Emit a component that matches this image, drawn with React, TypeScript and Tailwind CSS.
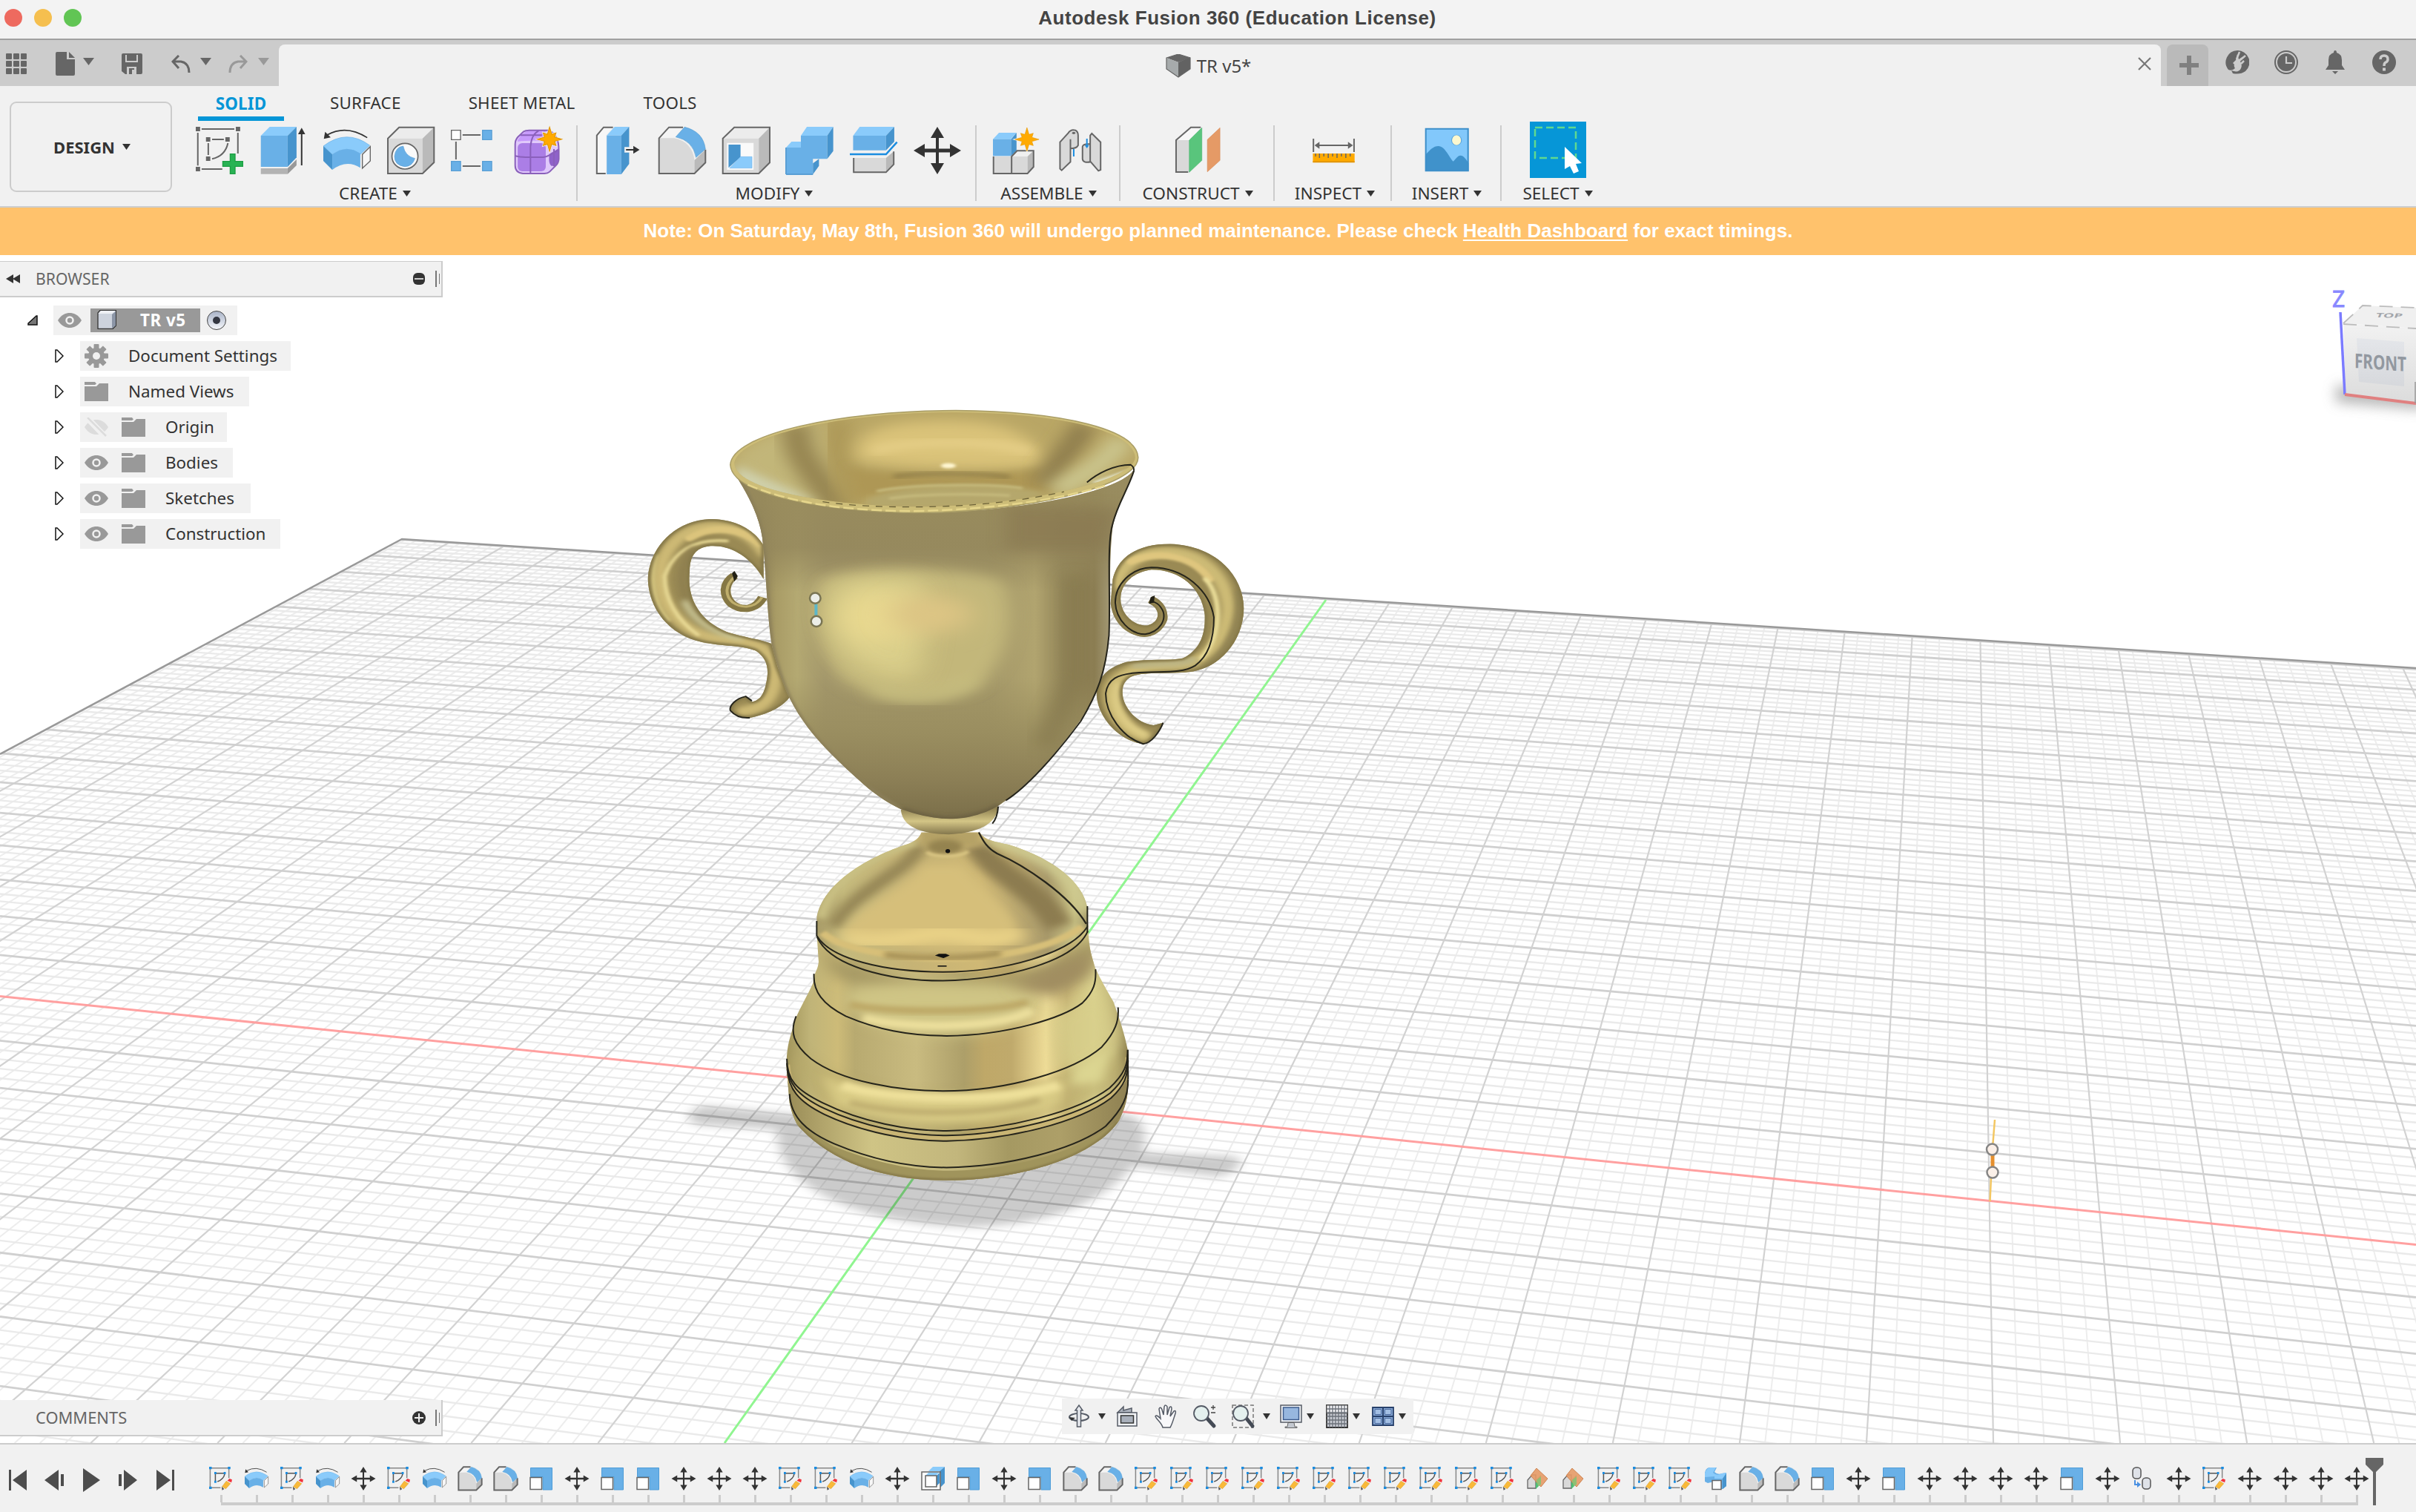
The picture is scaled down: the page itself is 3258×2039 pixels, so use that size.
import React from "react";

const INK = "#666666";

/* ---------- helpers ---------- */

function Pic({ box, className, children }: { box: string; className: string; children: React.ReactNode }) {
  return (
    <svg viewBox={box} preserveAspectRatio="none" className={"shrink-0 overflow-visible " + className}>
      {children}
    </svg>
  );
}

function Line(props: React.SVGProps<SVGPathElement>) {
  return <path fill="none" stroke={INK} strokeWidth={2} vectorEffect="non-scaling-stroke" {...props} />;
}

function Caret({ className = "h-2 w-[11px] text-[#333]" }: { className?: string }) {
  return (
    <svg viewBox="0 0 11 8" preserveAspectRatio="none" className={"shrink-0 " + className}>
      <path d="M0 0H11L5.5 8Z" fill="currentColor" />
    </svg>
  );
}

const star = (cx: number, cy: number, rx: number, ry: number) =>
  Array.from({ length: 16 }, (_, i) => {
    const r = i % 2 ? 0.45 : i % 4 === 0 ? 1 : 0.74;
    const a = (i * Math.PI) / 8 - Math.PI / 2;
    return `${(cx + rx * r * Math.cos(a)).toFixed(1)},${(cy + ry * r * Math.sin(a)).toFixed(1)}`;
  }).join(" ");

/* ---------- toolbar icons ---------- */

const IconSketch = () => (
  <Pic box="70 30 186 192" className="size-16">
    <Line d="M93 39H221M78 54V187M235 54V138M93 201H174M134 81H180M119 96V144M196 96Q185 148 134 160" />
    <path fill={INK} d="M70 30h17v18H70zM227 30h17v18h-17zM70 192h17v18H70zM110 72h17v18h-17zM186 72h17v18h-17zM110 150h17v18h-17z" />
    <path fill="#29b354" stroke="#1e9e44" strokeWidth="4" d="M205 140h19v30h30v20h-30v30h-19v-30h-29v-20h29z" />
  </Pic>
);
const IconExtrude = () => (
  <Pic box="320 30 186 192" className="size-16">
    <path fill="#b3b3b3" d="M325 198H430V221H325z" />
    <path fill="#999" d="M430 198L465 162V186L430 221z" />
    <path fill="#8acbfb" d="M325 66L360 30H465L430 66z" />
    <path fill="#69b0e7" d="M325 66H430V192H325z" />
    <path fill="#4794cd" d="M430 66L465 30V154L430 192z" />
    <Line d="M485 55V186" stroke="#333" />
    <path fill="#333" d="M485 34L499 60H471z" />
  </Pic>
);
const RevolveArt = () => (
  <>
    <path fill="#8acbfb" stroke="#69b0e7" strokeWidth="2" d="M569 108Q660 36 751 105L716 140Q660 100 604 142z" />
    <path fill="#4794cd" d="M569 108L604 142V204L569 168z" />
    <path fill="#69b0e7" d="M604 142Q660 100 714 138V196Q660 160 604 204z" />
    <path fill="#f7f7f7" stroke={INK} strokeWidth="4" d="M722 142L753 110V168L722 198z" />
    <path fill="none" stroke="#333" strokeWidth="5" d="M741 74Q660 20 585 62" />
    <path fill="#333" d="M571 79L576 50L598 73z" />
  </>
);
const IconRevolve = () => (
  <Pic box="569 30 186 192" className="size-16">
    <RevolveArt />
  </Pic>
);
const IconHole = () => (
  <Pic box="819 30 186 192" className="size-16">
    <path fill="#ececec" d="M822 77L866 32H1003L958 77z" />
    <path fill="#d9d9d9" d="M822 77H958V219H822z" />
    <path fill="#bababa" d="M958 77L1003 32V174L958 219z" />
    <Line d="M822 77L866 32H1003V174L958 219H822z" />
    <ellipse cx="889" cy="149" rx="51" ry="52" fill="#fafafa" stroke={INK} strokeWidth="5" />
    <path fill="#69b0e7" stroke="#5a9fd5" strokeWidth="2" d="M882 108Q890 150 928 158Q918 190 889 191Q848 186 848 149Q852 112 882 108z" />
  </Pic>
);
const IconPattern = () => (
  <Pic box="1069 30 186 192" className="size-16">
    <Line d="M1115 63H1185M1089 90V162M1115 189H1185" />
    <path fill="#fff" stroke={INK} strokeWidth="4" d="M1071 44h36v38h-36z" />
    <path fill="#69b0e7" stroke="#5a9fd5" strokeWidth="4" d="M1193 44h36v38h-36zM1071 170h36v38h-36zM1193 170h36v38h-36z" />
  </Pic>
);
const IconForm = () => (
  <Pic box="1318 30 186 192" className="size-16">
    <path fill="#e0c9fb" d="M1320 100Q1320 84 1330 72L1352 50Q1360 44 1375 44H1450Q1492 60 1491 125V160Q1490 176 1480 186L1455 212Q1448 219 1435 219H1350Q1320 216 1320 186z" />
    <path fill="#c79afc" d="M1330 84Q1350 48 1380 44H1440L1430 86Q1360 84 1330 90z" />
    <rect x="1330" y="96" width="110" height="114" rx="18" fill="#ab7ee6" />
    <path fill="#8f62ca" d="M1453 140L1491 118V160Q1488 176 1478 188H1462Q1453 180 1453 165z" />
    <Line d="M1320 100Q1320 84 1330 72L1352 50Q1360 44 1375 44H1450Q1492 60 1491 125V160Q1490 176 1480 186L1455 212Q1448 219 1435 219H1350Q1320 216 1320 186z" stroke="#8a60bb" />
    <Line d="M1320 148Q1340 154 1370 153H1430Q1450 152 1491 122M1380 216V110Q1384 60 1412 46M1340 64H1425M1472 190V120" stroke="#8a60bb" />
    <polygon points={star(1455, 80, 58, 60)} fill="#f1f1f1" />
    <polygon points={star(1455, 80, 48, 49)} fill="#ffaa00" stroke="#e19400" strokeWidth="3" />
  </Pic>
);
const IconPressPull = () => (
  <Pic box="1143 510 91 192" className="size-16">
    <path fill="#f7f7f7" d="M1147 545L1160 512H1178L1164 545V699H1147z" />
    <Line d="M1164 699H1147V545L1160 512H1178" />
    <path fill="#8acbfb" d="M1166 545L1181 510H1209L1194 545z" />
    <path fill="#69b0e7" d="M1166 545H1194V702H1166z" />
    <path fill="#4794cd" d="M1194 545L1209 510V660L1194 702z" />
    <path fill="#f1f1f1" d="M1200 592H1212V578L1234 603L1212 628V614H1200z" />
    <path fill="#333" d="M1203 600H1217V587L1229 603L1217 619V606H1203z" />
  </Pic>
);
const FilletArt = () => (
  <>
    <path fill="#f4f4f4" d="M1267 556L1286 512H1313L1298 552z" />
    <path fill="#d9d9d9" d="M1267 556H1296Q1330 570 1335 645V699H1267z" />
    <path fill="#bababa" d="M1335 645L1356 602V655L1335 699z" />
    <Line d="M1313 512H1286L1267 556V699H1335L1356 655V602" />
    <path fill="#69b0e7" stroke="#4794cd" strokeWidth="1" d="M1299 551L1316 511Q1352 530 1356 600L1338 634Q1332 565 1299 551z" />
  </>
);
const IconFillet = () => (
  <Pic box="1266 510 91 192" className="size-16">
    <FilletArt />
  </Pic>
);
const IconShell = () => (
  <Pic box="1388 510 91 192" className="size-16">
    <path fill="#ececec" d="M1389 557L1411 512H1479L1458 557z" />
    <path fill="#d9d9d9" d="M1389 557H1458V699H1389z" />
    <path fill="#bababa" d="M1458 557L1479 512V655L1458 699z" />
    <Line d="M1389 557L1411 512H1479V655L1458 699H1389z" />
    <path fill="#fafafa" d="M1397 575H1448V684H1397z" />
    <path fill="#4794cd" d="M1400 582H1423V632L1400 676z" />
    <path fill="#8acbfb" stroke="#69b0e7" strokeWidth="1" d="M1402 677L1423 631H1445V677z" />
  </Pic>
);
const IconCombine = () => (
  <Pic box="81 510 86.5 192" className="size-16">
    <path fill="#8acbfb" d="M108 546L119 510H167L156 546zM81 594L91 570H108V594z" />
    <path fill="#69b0e7" d="M108 546H156V640H130V702H81V594H108z" />
    <path fill="#4794cd" d="M156 546L167 510V608L156 640zM130 658L141 640V668L130 702z" />
    <Line d="M81 702H130M81 594V702" stroke="#5a9fd5" />
  </Pic>
);
const IconSplit = () => (
  <Pic box="197 510 86.5 192" className="size-16">
    <path fill="#8acbfb" d="M203 546L215 510H278L263 546z" />
    <path fill="#69b0e7" d="M203 546H263V605H203z" />
    <path fill="#4794cd" d="M263 546L278 510V570L263 605z" />
    <Line d="M197 621H263L283 572" stroke="#1a8ce0" strokeWidth={2.5} />
    <path fill="#d9d9d9" d="M204 636H263V694H204z" />
    <path fill="#bababa" d="M263 636L277 610V662L263 694z" />
    <Line d="M204 636V694H263L277 662V610" />
  </Pic>
);
const MoveArt = () => (
  <path fill="#333" d="M32 0L41 15H34V29.500H49V23L64 32L49 41V34.500H34V49H41L32 64L23 49H30V34.500H15V41L0 32L15 23V29.500H30V15H23Z" />
);
const IconMove = () => (
  <Pic box="0 0 64 64" className="size-16">
    <MoveArt />
  </Pic>
);
const IconNewComponent = () => (
  <Pic box="460 510 86.5 192" className="size-16">
    <path fill="#8acbfb" d="M460 560L471 534H503L492 560z" />
    <path fill="#69b0e7" d="M460 560H493V628H460z" />
    <path fill="#4794cd" d="M493 560L503 534V606L493 628z" />
    <path fill="#d9d9d9" d="M461 630H523V699H461z" />
    <path fill="#f0f0f0" d="M494 630L504 607H534L523 630z" />
    <path fill="#bababa" d="M523 630L534 607V672L523 699z" />
    <Line d="M461 630V699H523L534 672V607H504L494 630V699" />
    <polygon points={star(522, 561, 27, 58)} fill="#f1f1f1" />
    <polygon points={star(522, 561, 22, 48)} fill="#ffaa00" stroke="#e19400" strokeWidth="1" />
  </Pic>
);
const IconJoint = () => (
  <Pic box="576 510 86.500 192" className="size-16">
    <path fill="#d9d9d9" d="M582 572L597 535Q602 518 610 524Q615 530 615 545V585Q612 598 601 598V652L585 686L582 680z" />
    <Line d="M582 572L597 535Q602 518 610 524Q615 530 615 545V585Q612 598 601 598V652L585 686L582 680zM601 598V560" />
    <ellipse cx="607" cy="535" rx="3" ry="5" fill={INK} />
    <path fill="#d9d9d9" d="M637 572L639 535L656 572V684L652 688L638 652Q624 658 623 640V590Q624 578 637 580z" />
    <Line d="M637 580V545L640 537L656 572V684L652 688L638 652Q624 658 623 640V590Q624 578 637 580V652" />
    <Line d="M607 600V630M631 558V588" stroke="#1a8ce0" />
    <path fill="#1a8ce0" d="M627 584H635L631 597z" />
  </Pic>
);
const IconConstruct = () => (
  <Pic box="789 510 86.500 192" className="size-16">
    <path fill="#d9d9d9" d="M793 564H817V694H793z" />
    <path fill="#f7f7f7" d="M793 564L820 512H838L817 564z" />
    <Line d="M815 693H793V564L820 512H838" />
    <path fill="#59c57c" stroke="#3eb065" strokeWidth="1" d="M817 564L840 514V646L817 694z" />
    <path fill="#e59a66" stroke="#d58450" strokeWidth="1" d="M850 562L873 514V646L850 692z" />
  </Pic>
);
const IconInspect = () => (
  <Pic box="1035 510 86.500 192" className="size-16">
    <Line d="M1042 558V612M1116 558V612M1046 585H1112" />
    <path fill={INK} d="M1044 585L1053 571V599zM1114 585L1105 571V599z" />
    <path fill="#ffaa00" d="M1041 618H1117V654H1041z" />
    <Line d="M1041 652H1117" stroke="#e19400" />
    <Line d="M1046 618V630M1053 618V636M1061 618V630M1069 618V636M1077 618V630M1085 618V636M1093 618V630M1101 618V636M1109 618V630" strokeWidth={1.500} />
  </Pic>
);
const IconInsert = () => (
  <Pic box="1242 510 86.500 192" className="size-16">
    <path fill="#82c8fb" d="M1246 516H1325V690H1246z" />
    <ellipse cx="1303" cy="564" rx="9" ry="21" fill="#fdf8cf" stroke="#5aa5de" strokeWidth="1.500" />
    <path fill="#4092cb" d="M1246 625C1255 602 1261 588 1270 588C1282 588 1290 636 1297 650C1302 640 1305 626 1310 626C1317 626 1321 646 1325 656V690H1246z" />
    <Line d="M1247 518H1324V688H1247z" stroke="#3e8fc9" />
  </Pic>
);
const IconSelect = () => (
  <div className="flex h-[76px] w-[76px] items-center justify-center bg-[#0696d7]">
    <svg viewBox="0 0 76 76" className="size-[76px]">
      <path fill="none" stroke="#5fd98f" strokeWidth="2.500" strokeDasharray="10 5" d="M7 8H62V49H7z" />
      <path fill="#fff" d="M47 34L70 56L62 57L66 67L59 70L54 60L47 64z" />
    </svg>
  </div>
);

/* ---------- timeline icons ---------- */

const tl = "h-8 w-8";
const TSketch = () => (
  <Pic box="402 354 45.6 96" className={tl}>
    <Line d="M405 359H441M404 362V438M440 362V400M405 439H424" strokeWidth={1.500} stroke="#888" />
    <Line d="M415 380H432M414 383V412M432 383Q430 405 418 414" strokeWidth={1.500} stroke="#555" />
    <path fill="#1a8ce0" d="M402 354h5v10h-5zM438 354h5v10h-5zM402 434h5v10h-5zM412 375h4v9h-4zM430 375h4v9h-4zM412 410h4v9h-4z" />
    <path fill="#f9b93a" stroke="#d99a20" strokeWidth="1" d="M427 434L435 412L443 422L434 443z" />
    <path fill="#f2323c" d="M437 410L441 402L446 406L445 418z" />
    <path fill="#555" d="M426 434L431 444L427 449z" />
  </Pic>
);
const TRevolve = () => (
  <Pic box="569 30 186 192" className={tl}>
    <RevolveArt />
  </Pic>
);
const TMove = () => (
  <Pic box="1 0 62 64" className={tl}>
    <MoveArt />
  </Pic>
);
const TFillet = () => (
  <Pic box="1266 510 91 192" className={tl}>
    <FilletArt />
  </Pic>
);
const TScale = () => (
  <Pic box="0 0 32 32" className={tl}>
    <path fill="#69b0e7" stroke="#4f9dd8" d="M1.500 1.500H30.500V31H18V13.500H1.500z" />
    <path fill="#fff" stroke={INK} strokeWidth="1.500" d="M1 14.500H16.500V30.500H1z" />
  </Pic>
);
const TExtrude = () => (
  <Pic box="0 0 32 32" className={tl}>
    <path fill="#8acbfb" d="M10 6L16 0H32L25 6z" />
    <path fill="#4794cd" d="M25 6L32 0V22L25 29z" />
    <path fill="#fff" stroke={INK} strokeWidth="1.500" d="M1 7H26V31H1z" />
    <path fill="#8acbfb" d="M6 12L10 8H24L20 12z" />
    <path fill="#4794cd" d="M21 12L25 8V22L21 26z" />
    <path fill="#fff" stroke={INK} strokeWidth="1.500" d="M6 12H21V27H6z" />
  </Pic>
);
const TPlane = () => (
  <Pic box="0 0 32 32" className={tl}>
    <path fill="#d9d9d9" stroke={INK} strokeWidth="1.300" d="M2 18L8 11H13V29H2z" />
    <path fill="#4cbf74" d="M13 18L20 11V23L13 30z" />
    <path fill="#e59a66" fillOpacity="0.9" stroke="#cf8450" d="M14 2L29 16L20 27L6 12z" />
    <path fill="#8fbf74" d="M14 18L20 13V24L16 26z" />
  </Pic>
);
const TCombine = () => (
  <Pic box="0 0 32 32" className={tl}>
    <path fill="#69b0e7" d="M1 8Q2 2 7 1H17L14 7Q18 11 24 9L30 8V26L25 30H13V20L5 22L1 20z" />
    <path fill="#8acbfb" d="M1 9Q3 2 8 1H16L12 8Q17 13 24 9L30 8L25 16H14V13L1 14z" />
    <path fill="#4794cd" d="M25 16L30 9V26L25 30z" />
    <path fill="#fff" stroke={INK} strokeWidth="1.500" d="M11 18.500H23V30.500H11z" />
  </Pic>
);
const TJoint = () => (
  <Pic box="0 0 32 32" className={tl}>
    <rect x="2" y="1" width="11" height="15" rx="4.500" fill="#dfe2e8" stroke="#555" strokeWidth="1.500" />
    <rect x="15" y="15" width="11" height="15" rx="4.500" fill="#dfe2e8" stroke="#555" strokeWidth="1.500" />
    <path stroke="#4a90e2" strokeWidth="2" fill="none" d="M5 18V24H10" />
    <path fill="#4a90e2" d="M8 20L13 24L8 28z" />
  </Pic>
);

const timelineIcons: Record<string, () => React.ReactElement> = {
  s: TSketch,
  r: TRevolve,
  m: TMove,
  f: TFillet,
  c: TScale,
  e: TExtrude,
  p: TPlane,
  b: TCombine,
  j: TJoint,
};
const timeline = "srsrmsrffcmccmmmssrmecmcffsssssssssssppsssbffcmcmmmmcmjmsmmmm".split("");

/* ---------- scene ---------- */

const HORIZON = -400;
const fan: { x: number; major: boolean; axis: boolean }[] = [];
for (let i = -80; i <= 100; i++) fan.push({ x: 977.5 + (171.05 / 5) * i, major: i % 5 === 0, axis: i === 0 });
const rows: { y0: number; y1: number; major: boolean; axis: boolean }[] = [];
for (let i = -50; i <= 90; i++) {
  const s = 1 / (9.732 + (0.322 / 5) * i);
  rows.push({ y0: HORIZON + s * 16969, y1: HORIZON + s * (16969 + 3258), major: i % 5 === 0, axis: i === 0 });
}

function Grid() {
  return (
    <g>
      <clipPath id="floor">
        <path d="M542 727L3258 901V1946H0V1017z" />
      </clipPath>
      <g clipPath="url(#floor)" fill="none">
        {fan.filter((l) => !l.major).map((l) => (
          <path key={l.x} d={`M2650 ${HORIZON}L${l.x} 1946`} stroke="#ededed" strokeWidth="2" />
        ))}
        {rows.filter((l) => !l.major).map((l) => (
          <path key={l.y0} d={`M0 ${l.y0}L3258 ${l.y1}`} stroke="#eaeaea" strokeWidth="2.400" />
        ))}
        {fan.filter((l) => l.major && !l.axis).map((l) => (
          <path key={l.x} d={`M2650 ${HORIZON}L${l.x} 1946`} stroke="#d2d2d2" strokeWidth="2.200" />
        ))}
        {rows.filter((l) => l.major && !l.axis).map((l) => (
          <path key={l.y0} d={`M0 ${l.y0}L3258 ${l.y1}`} stroke="#d0d0d0" strokeWidth="2.800" />
        ))}
      </g>
      <path d="M0 1017L542 727L3258 901" fill="none" stroke="#999" strokeWidth="2.500" />
      <path d="M0 1343.500L3258 1678.500" stroke="#ffa0a0" strokeWidth="3" />
      <path d="M1788 809L977 1946" stroke="#90f590" strokeWidth="3" />
    </g>
  );
}

const CUP =
  "M258 275C285 340 325 420 335 520C345 640 345 760 357 880C370 960 385 1020 400 1065C440 1180 500 1260 577 1358C610 1400 640 1425 668 1445C720 1470 760 1480 800 1477C850 1472 890 1445 905 1430C960 1380 1040 1260 1100 1140C1140 1050 1160 980 1167 850C1172 720 1168 580 1177 480C1190 400 1215 350 1228 285C1200 360 960 432 700 435C470 425 300 370 258 275Z";
const RIM = "M258 270C262 165 520 85 800 85C1060 88 1235 150 1238 245C1238 345 960 434 700 434C470 428 262 370 258 270Z";
const INNER = "M268 262C280 170 530 91 800 91C1050 94 1226 153 1231 245C1226 330 950 412 700 413C480 407 264 352 268 262Z";
const LEFT_HANDLE =
  "M338 545C310 480 260 455 210 455C120 460 62 560 60 660C62 760 110 850 190 875C240 890 290 885 320 905C345 930 352 960 345 1010C340 1050 330 1075 310 1078L295 1060C270 1068 255 1092 258 1108C270 1128 285 1135 305 1133C350 1120 385 1095 402 1060L372 960L357 880C330 865 280 855 250 840C180 800 155 720 160 640C160 590 170 555 205 548C260 540 310 590 338 660Z";
const RIGHT_HANDLE =
  "M1177 660C1190 580 1240 540 1315 540C1420 545 1490 640 1492 760C1490 880 1430 960 1370 975C1320 985 1270 975 1230 988C1200 1000 1195 1040 1205 1080C1220 1130 1250 1155 1275 1158L1298 1150C1290 1180 1270 1220 1250 1222C1200 1215 1140 1140 1138 1050C1140 990 1170 960 1210 943C1260 930 1310 940 1345 930C1390 900 1400 840 1398 780C1390 690 1340 628 1270 628C1215 640 1190 690 1197 745C1205 795 1235 820 1260 818C1285 810 1290 780 1281 763C1278 752 1268 748 1262 740L1272 718C1295 730 1312 760 1308 800C1295 845 1270 858 1250 857C1205 850 1175 800 1172 740Z";
const DOME =
  "M655 158C650 175 640 188 620 198C520 240 400 330 385 450V510C420 590 560 640 710 640C870 640 1040 570 1085 480L1082 410C1070 330 1000 250 880 200C845 190 818 185 805 158Z";
const FOOT =
  "M385 500L390 600C388 630 376 640 376 670C360 720 330 780 325 820C312 870 307 900 307 960L315 1080C320 1110 325 1130 335 1155C410 1270 540 1345 720 1345C900 1345 1100 1270 1165 1140C1180 1100 1188 1060 1188 1020L1187 900C1180 850 1165 790 1150 735C1130 690 1110 640 1103 620C1095 580 1086 560 1085 475C1040 570 870 634 710 634C560 634 420 590 385 500Z";
const RINGS = [
  "M385 460V510C420 590 560 634 710 634C870 634 1040 570 1083 480",
  "M386 515C420 615 570 664 710 664C870 660 1050 600 1084 495",
  "M378 640C375 700 400 745 460 785C540 830 620 852 720 852C880 850 1020 790 1070 740C1100 700 1106 670 1104 625",
  "M332 785C315 840 325 880 370 930C450 1010 600 1040 710 1040C880 1040 1050 970 1120 890C1155 840 1165 800 1162 755",
  "M308 930C308 1000 330 1035 400 1080C500 1145 620 1176 720 1176C880 1172 1060 1110 1140 1030C1180 980 1187 950 1187 900",
  "M308 945C310 1015 335 1055 405 1100C500 1160 620 1192 720 1192C880 1188 1060 1128 1142 1047C1180 1000 1187 970 1187 915",
  "M309 965C312 1030 335 1075 405 1120C500 1180 620 1211 720 1211C880 1207 1060 1148 1144 1064C1180 1020 1187 990 1188 935",
  "M315 1050C318 1130 360 1180 430 1220C520 1270 620 1301 720 1301C880 1298 1050 1240 1130 1160C1175 1100 1188 1060 1188 1000",
];

function Handle({ d, id, children }: { d: string; id: string; children: React.ReactNode }) {
  return (
    <g>
      <clipPath id={id}>
        <path d={d} />
      </clipPath>
      <path d={d} fill="#9a8a54" />
      <g clipPath={`url(#${id})`} fill="none" strokeLinecap="round">
        {children}
        <path d={d} stroke="#857848" strokeWidth="12" filter="url(#b4)" />
      </g>
    </g>
  );
}

function Trophy() {
  return (
    <g>
      <defs>
        {[
          ["b4", 4],
          ["b8", 8],
          ["b14", 14],
          ["b22", 22],
          ["b34", 34],
        ].map(([id, s]) => (
          <filter key={id} id={String(id)} x="-50%" y="-50%" width="200%" height="200%">
            <feGaussianBlur stdDeviation={s} />
          </filter>
        ))}
        <linearGradient id="cupH" x1="335" x2="1175" y1="0" y2="0" gradientUnits="userSpaceOnUse">
          <stop offset="0" stopColor="#8e8157" />
          <stop offset="0.04" stopColor="#a99c66" />
          <stop offset="0.1" stopColor="#b4a972" />
          <stop offset="0.18" stopColor="#a2966a" />
          <stop offset="0.65" stopColor="#a39768" />
          <stop offset="0.78" stopColor="#b1a46f" />
          <stop offset="0.86" stopColor="#94875a" />
          <stop offset="0.95" stopColor="#8b7d52" />
          <stop offset="1" stopColor="#a59b78" />
        </linearGradient>
        <linearGradient id="cupV" x1="0" x2="0" y1="400" y2="1480" gradientUnits="userSpaceOnUse">
          <stop offset="0" stopColor="#978a5c" stopOpacity="0.9" />
          <stop offset="0.14" stopColor="#93865b" stopOpacity="0.8" />
          <stop offset="0.28" stopColor="#93865b" stopOpacity="0" />
          <stop offset="0.55" stopColor="#9a8e5e" stopOpacity="0" />
          <stop offset="0.72" stopColor="#988c5e" stopOpacity="0.8" />
          <stop offset="0.87" stopColor="#8b7e55" stopOpacity="0.95" />
          <stop offset="1" stopColor="#7a6e49" />
        </linearGradient>
        <linearGradient id="dome" x1="385" x2="1085" y1="0" y2="0" gradientUnits="userSpaceOnUse">
          <stop offset="0" stopColor="#a99c68" />
          <stop offset="0.1" stopColor="#c4b97c" />
          <stop offset="0.35" stopColor="#c6b375" />
          <stop offset="0.6" stopColor="#cfb875" />
          <stop offset="0.85" stopColor="#a8996a" />
          <stop offset="0.95" stopColor="#c9c285" />
          <stop offset="1" stopColor="#a39868" />
        </linearGradient>
        <linearGradient id="foot" x1="307" x2="1188" y1="0" y2="0" gradientUnits="userSpaceOnUse">
          <stop offset="0" stopColor="#a3965c" />
          <stop offset="0.07" stopColor="#c0b478" />
          <stop offset="0.15" stopColor="#cdbb78" />
          <stop offset="0.2" stopColor="#b8aa70" />
          <stop offset="0.38" stopColor="#c9bb80" />
          <stop offset="0.52" stopColor="#ad9f69" />
          <stop offset="0.58" stopColor="#bfa868" />
          <stop offset="0.66" stopColor="#c0aa6c" />
          <stop offset="0.76" stopColor="#efdd98" />
          <stop offset="0.82" stopColor="#c9b777" />
          <stop offset="0.9" stopColor="#dcd490" />
          <stop offset="0.96" stopColor="#bcb074" />
          <stop offset="1" stopColor="#8f8250" />
        </linearGradient>
        <linearGradient id="band" x1="307" x2="1188" y1="0" y2="0" gradientUnits="userSpaceOnUse">
          <stop offset="0" stopColor="#988b56" />
          <stop offset="0.1" stopColor="#b0a36a" />
          <stop offset="0.25" stopColor="#cfc485" />
          <stop offset="0.5" stopColor="#c2b67c" />
          <stop offset="0.65" stopColor="#a59962" />
          <stop offset="0.8" stopColor="#ad9f68" />
          <stop offset="1" stopColor="#8f8152" />
        </linearGradient>
        <linearGradient id="collar" x1="0" x2="0" y1="75" y2="165" gradientUnits="userSpaceOnUse">
          <stop offset="0" stopColor="#8d7f50" />
          <stop offset="0.5" stopColor="#d3c586" />
          <stop offset="1" stopColor="#83764c" />
        </linearGradient>
      </defs>

      {/* floor shadow */}
      <g transform="translate(900 1060) scale(.52296 .39541)">
        <path
          d="M95 1090L330 1120H1180C1225 1130 1240 1170 1225 1250L1460 1262C1495 1275 1475 1315 1420 1332L1200 1296C1120 1430 960 1503 770 1503C520 1495 325 1390 290 1240L280 1170L80 1155C40 1140 50 1105 95 1090Z"
          fill="#000"
          fillOpacity="0.205"
          filter="url(#b14)"
        />
      </g>

      {/* base */}
      <g transform="translate(900 1060) scale(.52296 .39541)">
        <clipPath id="footClip">
          <path d={FOOT} />
        </clipPath>
        <path d={FOOT} fill="url(#foot)" />
        <g clipPath="url(#footClip)">
          <path d="M385 500C420 615 570 670 710 670C870 664 1050 600 1090 495L1130 560L1060 650C900 730 560 730 420 640Z" fill="#a59864" filter="url(#b22)" />
          <path d="M460 700C560 660 860 660 950 700C1000 760 900 850 720 850C560 846 450 780 460 700Z" fill="#cfc585" filter="url(#b22)" />
          <path d="M470 745C560 775 850 775 930 735" stroke="#bda866" strokeWidth="24" fill="none" filter="url(#b8)" />
          <path d="M505 790C600 830 860 830 940 765" stroke="#ecdf9c" strokeWidth="28" fill="none" filter="url(#b8)" />
          <path d="M890 680L980 620L1100 560L1090 640L1000 720Z" fill="#a08d60" filter="url(#b22)" />
          <path d="M980 740L1010 780L1110 690L1130 720L1170 860L1080 980L1010 960Z" fill="#d8cf8b" opacity=".8" filter="url(#b22)" />
          <path d="M320 960C350 1080 560 1190 720 1185C900 1185 1120 1100 1190 960L1130 900C1050 1000 880 1045 710 1042C560 1040 420 1000 340 890Z" fill="#b8aa6c" opacity=".55" filter="url(#b14)" />
          <path d="M400 985C500 1050 620 1062 720 1062C860 1062 960 1040 1030 1000L1010 1080C920 1130 820 1150 720 1150C600 1150 480 1120 430 1080Z" fill="#d8ca84" filter="url(#b14)" />
          <path d="M450 1020C560 1072 860 1085 1010 1020" stroke="#eee09a" strokeWidth="32" fill="none" filter="url(#b8)" />
          <path d="M470 1080C600 1125 830 1125 960 1070" stroke="#bfae70" strokeWidth="20" fill="none" filter="url(#b8)" />
          <path d="M1050 960L1150 880L1120 1010L1040 1020Z" fill="#dcd591" filter="url(#b14)" />
          <path d="M300 960C312 1030 335 1075 405 1120C500 1180 620 1211 720 1211C880 1207 1060 1148 1144 1064C1180 1020 1187 990 1188 935L1200 1380H300Z" fill="url(#band)" />
          <path d="M309 950C312 1020 335 1065 405 1110C500 1170 620 1200 720 1200C880 1196 1060 1138 1144 1055C1180 1010 1187 980 1188 925" stroke="#c9b574" strokeWidth="14" fill="none" />
          <path d="M300 1050C318 1150 430 1230 430 1230C520 1276 620 1312 720 1312C880 1312 1050 1250 1130 1170L1200 1100V1380H300Z" fill="#a0945c" />
          <path d="M335 1160C410 1275 540 1347 720 1347C900 1347 1100 1275 1165 1145" stroke="#857848" strokeWidth="16" fill="none" filter="url(#b4)" />
        </g>

        <clipPath id="domeClip">
          <path d={DOME} />
        </clipPath>
        <path d={DOME} fill="url(#dome)" />
        <g clipPath="url(#domeClip)">
          <path d="M650 200C640 280 480 350 430 480" stroke="#948555" strokeWidth="40" fill="none" filter="url(#b14)" />
          <path d="M800 200C830 290 960 350 1010 480" stroke="#8c7c50" strokeWidth="70" fill="none" filter="url(#b14)" />
          <path d="M660 270C620 350 470 420 450 510C600 560 840 560 900 510C920 440 800 350 760 270Z" fill="#d6bf7a" filter="url(#b14)" />
          <path d="M450 520C580 545 620 510 710 500C800 510 840 545 920 500" stroke="#efd78a" strokeWidth="44" fill="none" filter="url(#b22)" />
          <path d="M400 500C480 600 900 640 1070 480" stroke="#d7bf78" strokeWidth="22" fill="none" filter="url(#b4)" />
          <path d="M560 575C640 590 780 590 860 570" stroke="#9f8a52" strokeWidth="18" fill="none" filter="url(#b8)" />
          <path d="M830 180C960 230 1060 300 1075 430" stroke="#cfca90" strokeWidth="40" fill="none" filter="url(#b14)" />
          <path d="M640 190C520 240 420 320 395 450" stroke="#c9c083" strokeWidth="26" fill="none" filter="url(#b8)" />
          <path d="M655 150H805V205H655Z" fill="#b5a266" filter="url(#b8)" />
          <ellipse cx="716" cy="208" rx="46" ry="26" fill="#94834f" filter="url(#b8)" />
          <path d="M670 225C680 245 760 245 775 222" stroke="#d9c582" strokeWidth="10" fill="none" filter="url(#b4)" />
        </g>
        <ellipse cx="723" cy="222" rx="6" ry="7" fill="#111" />
        <path d="M690 578L700 572H718L728 578L712 587Z" fill="#111" />
        <path d="M697 614H720" stroke="#111" strokeWidth="4" />
        <g fill="none" stroke="#25241b">
          {RINGS.map((d) => (
            <path key={d} d={d} strokeWidth="2" vectorEffect="non-scaling-stroke" />
          ))}
          <path d="M803 158C815 190 825 212 850 230C920 270 1035 370 1080 470" strokeWidth="2.200" vectorEffect="non-scaling-stroke" />
          <path d="M1083 410V500M1187 900L1188 1000" strokeWidth="2" vectorEffect="non-scaling-stroke" />
        </g>
        <path d="M602 80C605 130 640 162 725 165C800 160 850 130 853 70Z" fill="url(#collar)" />
        <path d="M853 70C852 90 850 110 838 128" stroke="#25241b" strokeWidth="2" vectorEffect="non-scaling-stroke" fill="none" />
      </g>

      {/* cup */}
      <g transform="translate(840 520) scale(.56122 .39541)">
        <path d="M336 722C318 768 285 768 262 745C240 715 242 672 268 648" fill="none" stroke="#857744" strokeWidth="24" />
        <path d="M334 722C316 762 285 760 264 740C244 715 246 680 268 652" fill="none" stroke="#bfae6c" strokeWidth="7" />
        <path d="M262 640L268 632L276 650L268 668Z" fill="#222015" />
        <Handle d={LEFT_HANDLE} id="lh">
          <path d="M340 570C310 500 260 480 210 482C130 490 90 570 88 660C92 760 150 850 230 862C300 870 350 880 365 960C370 1040 350 1100 290 1110" stroke="#cdb974" strokeWidth="34" filter="url(#b8)" />
          <path d="M330 540C290 490 220 470 160 520" stroke="#dcc47c" strokeWidth="22" filter="url(#b4)" />
          <path d="M250 530C170 520 120 570 100 650C100 730 130 800 180 850" stroke="#eadb96" strokeWidth="9" filter="url(#b4)" />
          <path d="M170 560C130 620 130 720 190 800" stroke="#8e7f50" strokeWidth="20" filter="url(#b8)" />
          <path d="M150 740C170 800 210 840 280 860" stroke="#c9c594" strokeWidth="18" filter="url(#b8)" />
          <path d="M80 580C65 650 70 740 110 800" stroke="#d6c680" strokeWidth="10" filter="url(#b4)" />
        </Handle>
        <path d="M310 1075L295 1060C270 1068 255 1092 258 1108C270 1128 285 1135 305 1133" fill="none" stroke="#25241b" strokeWidth="2" vectorEffect="non-scaling-stroke" />

        <Handle d={RIGHT_HANDLE} id="rh">
          <path d="M1185 680C1200 600 1250 565 1315 568C1400 575 1450 660 1455 760C1450 860 1410 940 1340 952C1270 955 1200 960 1175 1030C1165 1100 1200 1170 1250 1195" stroke="#cdbb76" strokeWidth="34" filter="url(#b8)" />
          <path d="M1220 600C1290 560 1370 580 1410 660" stroke="#dfc67e" strokeWidth="22" filter="url(#b4)" />
          <path d="M1400 660C1440 720 1440 850 1390 930" stroke="#ecdf9a" strokeWidth="12" filter="url(#b4)" />
          <path d="M1480 700C1490 800 1460 900 1400 960" stroke="#8f8253" strokeWidth="18" filter="url(#b8)" />
          <path d="M1230 955C1290 945 1330 955 1370 935" stroke="#b9b488" strokeWidth="18" filter="url(#b8)" />
          <path d="M1190 1020C1170 1090 1210 1170 1255 1190" stroke="#e3d28a" strokeWidth="16" filter="url(#b8)" />
        </Handle>
        <g fill="none" stroke="#25241b">
          <path d="M1298 1150C1290 1180 1270 1220 1250 1222C1200 1200 1160 1120 1160 1050C1165 1000 1190 985 1230 980C1290 972 1340 985 1375 955C1410 920 1420 860 1420 790C1410 700 1350 620 1270 620C1220 622 1183 680 1183 740C1185 800 1220 848 1255 848C1290 840 1305 800 1298 770C1290 745 1278 735 1268 738" strokeWidth="2" vectorEffect="non-scaling-stroke" />
        </g>
        <path d="M1264 744L1268 722L1278 716L1276 740Z" fill="#222015" />

        <clipPath id="cupClip">
          <path d={CUP} />
        </clipPath>
        <path d={CUP} fill="url(#cupH)" />
        <g clipPath="url(#cupClip)">
          <path d={CUP} fill="url(#cupV)" />
          <path d="M470 660C560 615 820 615 910 665C945 760 930 900 880 990C820 1090 590 1095 520 990C460 900 445 760 470 660Z" fill="#c3b77a" filter="url(#b22)" />
          <path d="M510 680C600 645 680 650 730 670C720 800 740 900 700 1000C640 1000 590 980 550 940C500 860 490 760 510 680Z" fill="#dcd08c" opacity=".9" filter="url(#b34)" />
          <ellipse cx="610" cy="790" rx="90" ry="90" fill="#e8d88f" filter="url(#b34)" />
          <ellipse cx="740" cy="780" rx="100" ry="65" fill="#ddc584" filter="url(#b34)" />
          <path d="M600 1030C680 1075 780 1070 850 1000" stroke="#c8bf80" strokeWidth="34" fill="none" filter="url(#b22)" />
          <path d="M990 600V1000" stroke="#b3a671" strokeWidth="36" filter="url(#b14)" />
          <path d="M920 400L1200 420L1160 560L920 560Z" fill="#877650" opacity=".6" filter="url(#b22)" />
          <path d="M1085 650V1000L1010 1230" stroke="#85784e" strokeWidth="50" fill="none" opacity=".7" filter="url(#b22)" />
          <path d="M262 290C300 350 325 440 335 520C345 640 345 760 357 880C370 960 385 1020 400 1065C440 1180 500 1260 577 1358L668 1445" fill="none" stroke="#8a7e58" strokeWidth="10" filter="url(#b4)" />
          <path d="M668 1448C720 1475 760 1483 800 1480C850 1475 890 1448 905 1433" fill="none" stroke="#655a3c" strokeWidth="16" filter="url(#b8)" />
        </g>
        <path d="M1228 290C1215 350 1190 400 1177 470C1162 540 1172 700 1168 850C1160 980 1140 1050 1100 1145C1040 1260 970 1370 920 1415" fill="none" stroke="#25241b" strokeWidth="2" vectorEffect="non-scaling-stroke" />

        <path d={RIM} fill="#cdbd78" />
        <path d={RIM} fill="none" stroke="#a99d66" strokeWidth="1.500" vectorEffect="non-scaling-stroke" />
        <clipPath id="innerClip">
          <path d={INNER} />
        </clipPath>
        <path d={INNER} fill="#b9a665" />
        <g clipPath="url(#innerClip)">
          <path d="M260 270C270 200 380 140 480 115L500 420L380 400Z" fill="#c2b679" filter="url(#b22)" />
          <path d="M420 130C400 230 480 330 520 420" stroke="#968551" strokeWidth="70" fill="none" filter="url(#b22)" />
          <path d="M275 270C330 310 400 350 470 400L380 390L268 330Z" fill="#cfd0ab" filter="url(#b14)" />
          <path d="M520 110C500 200 540 330 560 400" stroke="#ad9959" strokeWidth="60" fill="none" filter="url(#b22)" />
          <path d="M560 250C550 140 660 120 780 120C920 120 1000 170 1015 270C960 290 640 290 560 250Z" fill="#dac379" filter="url(#b22)" />
          <path d="M600 225C680 185 880 185 980 225" stroke="#e6cf88" strokeWidth="26" fill="none" filter="url(#b14)" />
          <path d="M540 275C620 310 940 310 1000 280L1030 370L560 380Z" fill="#ae9755" filter="url(#b14)" />
          <path d="M1110 130C1080 220 1040 260 1010 340" stroke="#8f7e4d" strokeWidth="60" fill="none" filter="url(#b22)" />
          <path d="M1200 180C1170 260 1100 310 1040 360" stroke="#cbc68f" strokeWidth="56" fill="none" filter="url(#b22)" />
          <path d="M580 400C620 330 920 320 1020 370L900 420H600Z" fill="#b5a76c" filter="url(#b8)" />
          <path d="M610 360C700 335 880 335 960 350M640 385C720 368 850 368 930 375" stroke="#c5b97c" strokeWidth="9" fill="none" filter="url(#b4)" />
          <path d="M650 310C730 295 850 295 930 312" stroke="#7f6e3e" strokeWidth="9" fill="none" filter="url(#b8)" />
          <ellipse cx="782" cy="273" rx="18" ry="9" fill="#fff6d0" filter="url(#b4)" />
          <path d="M1125 330L1225 280L1215 310L1150 335Z" fill="#dfe0c4" filter="url(#b4)" />
        </g>
        <path d="M1115 330C1140 300 1180 270 1220 270C1226 275 1228 282 1228 290" fill="none" stroke="#25241b" strokeWidth="2" vectorEffect="non-scaling-stroke" />
        <path d="M480 396C550 410 620 414 700 414C850 412 950 395 1060 362" fill="none" stroke="#6b6138" strokeWidth="1.300" strokeDasharray="9 9" vectorEffect="non-scaling-stroke" />
        <path d="M300 338C420 410 560 427 700 428C900 422 1060 385 1160 340" fill="none" stroke="#e6d68c" strokeWidth="2.500" strokeDasharray="14 5" vectorEffect="non-scaling-stroke" />

        <path d="M464 745V790" stroke="#5db7c9" strokeWidth="4" vectorEffect="non-scaling-stroke" />
        <ellipse cx="462" cy="725" rx="13" ry="18" fill="#eceee8" stroke="#7a7553" strokeWidth="2.500" vectorEffect="non-scaling-stroke" />
        <ellipse cx="465" cy="804" rx="13" ry="18" fill="#eceee8" stroke="#7a7553" strokeWidth="2.500" vectorEffect="non-scaling-stroke" />
      </g>
    </g>
  );
}

function ViewCube() {
  return (
    <g>
      <defs>
        <linearGradient id="cubeFace" x1="0" x2="0" y1="0" y2="1">
          <stop offset="0" stopColor="#f2f2f2" />
          <stop offset="1" stopColor="#dcdcdc" />
        </linearGradient>
        <linearGradient id="cubePanel" x1="0" x2="0" y1="0" y2="1">
          <stop offset="0" stopColor="#e4e6ea" />
          <stop offset="1" stopColor="#d6d8dc" />
        </linearGradient>
        <filter id="cubeShade" x="-30%" y="-100%" width="160%" height="300%">
          <feGaussianBlur stdDeviation="9" />
        </filter>
      </defs>
      <path d="M3150 520L3270 530V552L3150 542Z" fill="#9a9a9a" opacity=".75" filter="url(#cubeShade)" />
      <path d="M3160 436L3186 412L3258 415V443Z" fill="#f0f0f0" />
      <path d="M3160 436L3258 443V542L3163 532Z" fill="url(#cubeFace)" />
      <path d="M3178 456L3242 461V521L3181 515Z" fill="url(#cubePanel)" />
      <path d="M3160 437L3258 443M3160 436L3186 412L3258 415" fill="none" stroke="#bcbcbc" strokeWidth="1.800" strokeDasharray="18 11" />
      <path d="M3156 421L3162 532" stroke="#7b7bff" strokeWidth="3.500" />
      <path d="M3162 532L3258 544" stroke="#e08080" strokeWidth="4" />
      <path d="M3257 515V544" stroke="#999" strokeWidth="1.500" />
      <text x="3145" y="414" fontSize="30" fontFamily="Noto Sans, sans-serif" fill="#8888ff" stroke="#8888ff" strokeWidth="0.800">Z</text>
      <text transform="translate(3175 496) skewY(4)" fontSize="27" fontWeight="700" textLength="70" lengthAdjust="spacingAndGlyphs" fontFamily="Noto Sans, sans-serif" fill="#9298a0">FRONT</text>
      <text transform="translate(3203 428) skewX(-20) skewY(1) scale(1 .32)" fontSize="26" fontWeight="700" textLength="36" lengthAdjust="spacingAndGlyphs" fontFamily="Noto Sans, sans-serif" fill="#a3a6ab">TOP</text>
    </g>
  );
}

function Scene() {
  return (
    <svg viewBox="0 344 3258 1602" className="absolute inset-0 h-full w-full bg-white">
      <Grid />
      <Trophy />
      <path d="M2690 1510L2686 1560M2685 1588L2683.500 1620" stroke="#f3c763" strokeWidth="2.500" />
      <path d="M2687 1556V1574" stroke="#e6902e" strokeWidth="5" />
      <circle cx="2686.500" cy="1550" r="7.500" fill="#fbf0e8" stroke="#858585" strokeWidth="2.500" />
      <circle cx="2687" cy="1581" r="7.500" fill="#fbf0e8" stroke="#858585" strokeWidth="2.500" />
      <ViewCube />
    </svg>
  );
}

/* ---------- browser tree ---------- */

const Eye = ({ off = false }: { off?: boolean }) => (
  <svg viewBox="0 0 32 26" className="h-[26px] w-8 shrink-0">
    <path d="M0 13C5 5 11 3 16 3S27 5 32 13C27 21 21 23 16 23S5 21 0 13Z" fill={off ? "#dcdcdc" : "#999"} />
    {off ? (
      <path d="M3 0L28 26" stroke="#f1f1f1" strokeWidth="8" />
    ) : (
      <circle cx="16" cy="13" r="4.500" fill="none" stroke="#f1f1f1" strokeWidth="2.500" />
    )}
    {off && <path d="M4 0L29 25" stroke="#dcdcdc" strokeWidth="2.500" />}
  </svg>
);
const Folder = () => (
  <svg viewBox="0 0 32 26" className="h-[26px] w-8 shrink-0">
    <path d="M0 0H14L16 2.500L14 4H0zM0 6H16L20 2H32V26H0z" fill="#999" />
  </svg>
);
const Gear = () => (
  <svg viewBox="0 0 32 32" className="size-8 shrink-0">
    <g fill="#999">
      {[0, 45, 90, 135].map((a) => (
        <rect key={a} x="12.500" y="0" width="7" height="32" rx="1" transform={`rotate(${a} 16 16)`} />
      ))}
      <circle cx="16" cy="16" r="11" />
    </g>
    <circle cx="16" cy="16" r="5" fill="#f1f1f1" />
  </svg>
);
const Expander = () => (
  <svg viewBox="0 0 12 18" className="h-[18px] w-3 shrink-0">
    <path d="M1 1H3L11 9L3 17H1z" fill="#fff" stroke="#111" strokeWidth="1.500" />
  </svg>
);

function TreeRow({ width, icons, label }: { width: string; icons: React.ReactNode; label: string }) {
  return (
    <div className="flex h-12 items-center pl-[74px]">
      <Expander />
      <div className={"ml-[22px] flex h-10 items-center gap-[18px] bg-[#f1f1f1] pl-1.5 " + width}>
        {icons}
        <span className="ml-[9px]">{label}</span>
      </div>
    </div>
  );
}

function DragBars() {
  return (
    <div className="flex gap-[3px]">
      <div className="h-[22px] w-[1.500px] bg-[#777]" />
      <div className="mt-1 h-3.5 w-[1.500px] bg-[#777]" />
    </div>
  );
}

function BrowserPanel() {
  return (
    <div className="absolute left-0 top-2 w-[597px] text-[22.4px] text-[#333]">
      <div className="flex h-[49px] items-center border-b-2 border-r-2 border-t border-[#ccc] bg-[#f1f1f1] pl-2 pr-0.5">
        <svg viewBox="0 0 19 12" className="h-3 w-[19px]">
          <path d="M0 6L10 0V12zM9 6L19 0V12z" fill="#333" />
        </svg>
        <span className="ml-[21px] flex-1 text-[21.200px] text-[#666]">BROWSER</span>
        <div className="mr-[14px] flex size-4 items-center justify-center rounded-[6px] bg-[#333]">
          <div className="h-0.5 w-3 bg-[#ccc]" />
        </div>
        <DragBars />
      </div>
      <div className="mt-[7px] flex h-12 items-center pl-[37px]">
        <svg viewBox="0 0 14 14" className="size-3.5">
          <path d="M1 11V13H13V1H12z" fill="#777" stroke="#111" strokeWidth="1.500" />
        </svg>
        <div className="ml-[21px] flex h-10 w-[248px] items-center bg-[#f1f1f1] pl-1.5">
          <Eye />
          <div className="ml-3 flex h-8 w-[148px] items-center bg-[#999] pl-[9px]">
            <svg viewBox="0 0 26 26" className="-mt-0.5 size-[26px]">
              <path d="M1 4L4 0.500H25.500V21L21 25.500H1z" fill="#cdd3dd" stroke="#333" strokeWidth="1.300" />
              <path d="M1.500 5L5 1H25L20 5z" fill="#eef0f4" />
              <path d="M20 6L25 2V21L20 25z" fill="#8b95a6" />
            </svg>
            <span className="ml-[32px] font-bold tracking-[0.500px] text-white">TR v5</span>
          </div>
          <div className="ml-[9px] flex size-[26px] items-center justify-center rounded-full border-[1.500px] border-[#444] bg-linear-to-b from-[#aab4c8] to-[#f4f6fa]">
            <div className="size-2.5 rounded-full bg-[#333641]" />
          </div>
        </div>
      </div>
      <TreeRow width="w-[284px]" label="Document Settings" icons={<Gear />} />
      <TreeRow width="w-[228px]" label="Named Views" icons={<Folder />} />
      <TreeRow width="w-[198px]" label="Origin" icons={<><Eye off /><Folder /></>} />
      <TreeRow width="w-[206px]" label="Bodies" icons={<><Eye /><Folder /></>} />
      <TreeRow width="w-[230px]" label="Sketches" icons={<><Eye /><Folder /></>} />
      <TreeRow width="w-[270px]" label="Construction" icons={<><Eye /><Folder /></>} />
    </div>
  );
}

function CommentsPanel() {
  return (
    <div className="absolute left-0 top-[1544px] flex h-[49px] w-[597px] items-center border-b-2 border-r-2 border-[#ccc] bg-[#f1f1f1] pl-12 pr-0.5">
      <span className="flex-1 pt-px text-[21.900px] text-[#666]">COMMENTS</span>
      <div className="mr-[13px] flex size-[18px] items-center justify-center rounded-full bg-[#333]">
        <svg viewBox="0 0 12 12" className="size-3">
          <path d="M6 0V12M0 6H12" stroke="#eee" strokeWidth="2" />
        </svg>
      </div>
      <DragBars />
    </div>
  );
}

function NavBar() {
  const caret = <Caret className="h-2 w-2.5 text-[#333]" />;
  return (
    <div className="absolute left-[1432px] top-[1542px] flex h-12 w-[474px] items-center bg-[#f1f1f1] pl-2">
      <Pic box="0 0 30 32" className="h-8 w-[30px]">
        <ellipse cx="15" cy="17" rx="13" ry="5" fill="none" stroke="#555b66" strokeWidth="2" />
        <path d="M12.500 30V8H10L15 1L20 8H17.500V30z" fill="#e6e9ee" stroke="#555b66" strokeWidth="1.500" />
        <path d="M2 17L5 22L10 18" fill="#333" />
      </Pic>
      <span className="ml-[11px]">{caret}</span>
      <Pic box="0 0 28 28" className="ml-[15px] h-7 w-7">
        <path d="M1 9L9 1V6L20 3V9z" fill="#aeb4be" stroke="#555b66" strokeWidth="1.500" />
        <rect x="1" y="9" width="26" height="18" fill="#f2f4f7" stroke="#555b66" strokeWidth="1.500" />
        <rect x="5.500" y="13" width="17" height="10" fill="#a9b0bb" stroke="#333" strokeWidth="1.500" />
      </Pic>
      <Pic box="0 0 30 32" className="ml-[23px] h-8 w-[30px]">
        <path d="M11 31C9 24 3 21 1 16C2 14 4 15 8 19L6 6C7 3 9 4 10 7L12 14L13 3C14 0 16 1 17 3L17 14L20 4C22 2 23 3 23 6L21 16L26 9C28 8 29 9 28 12C26 18 24 26 21 31z" fill="#f8f8fa" stroke="#555b66" strokeWidth="1.500" />
      </Pic>
      <Pic box="0 0 30 32" className="ml-[22px] h-8 w-[30px]">
        <path d="M19 19L28 29" stroke="#444a55" strokeWidth="5" strokeLinecap="round" />
        <circle cx="11" cy="12" r="10" fill="#e4f0ee" stroke="#555b66" strokeWidth="1.800" />
        <path d="M24 4H30M27 1V7M24 11H30" stroke="#444" strokeWidth="1.300" />
      </Pic>
      <Pic box="0 0 30 32" className="ml-[22px] h-8 w-[30px]">
        <path d="M1 1H29V31H1z" fill="none" stroke="#777" strokeWidth="1.500" strokeDasharray="5 3" />
        <path d="M20 19L28 29" stroke="#444a55" strokeWidth="5" strokeLinecap="round" />
        <circle cx="12" cy="12" r="10" fill="#e4f0ee" stroke="#555b66" strokeWidth="1.800" />
      </Pic>
      <span className="ml-[12px]">{caret}</span>
      <Pic box="0 0 30 32" className="ml-[13px] h-8 w-[30px]">
        <path d="M1 1H29V24H1z" fill="#f2f4f7" stroke="#555b66" strokeWidth="1.500" />
        <path d="M4.500 4H25.500V20.500H4.500z" fill="#97b7df" stroke="#3d5c8e" strokeWidth="1.500" />
        <path d="M11 24.500H19L20 30H23V31.500H7V30H10z" fill="#c3c8d0" stroke="#666" />
      </Pic>
      <span className="ml-1.5">{caret}</span>
      <Pic box="0 0 30 32" className="ml-[16px] h-8 w-[30px]">
        <path d="M1 1H29V31H1z" fill="#c9ccd3" stroke="#333" strokeWidth="1.800" />
        <path d="M1 1H29V12H1z" fill="#f1f1f3" stroke="#555" />
        <path d="M5 1V31M9 1V31M13 1V31M17 1V31M21 1V31M25 1V31M1 6H29M1 11H29M1 16H29M1 21H29M1 26H29" stroke="#6b7079" strokeWidth="1.300" />
      </Pic>
      <span className="ml-1.5">{caret}</span>
      <Pic box="0 0 30 26" className="ml-[16px] h-[26px] w-[30px]">
        <path d="M1 1H29V25H1z" fill="#88a9d6" stroke="#27406b" strokeWidth="1.800" />
        <path d="M15 1V25M1 13H29" stroke="#27406b" strokeWidth="2" />
        <path d="M4 3.500H12.500V10.500H4zM17.500 3.500H26V10.500H17.500zM4 15.500H12.500V22.500H4zM17.500 15.500H26V22.500H17.500z" fill="#a3bfe4" stroke="#4a689b" />
      </Pic>
      <span className="ml-1.5">{caret}</span>
    </div>
  );
}

/* ---------- chrome ---------- */

function TabBar() {
  return (
    <div className="flex h-[62px] shrink-0 bg-[#ccc] pt-1.5">
      <div className="flex w-[376px] items-center pb-1 pl-2 text-[#666]">
        <svg viewBox="0 0 28 28" className="size-7">
          {[0, 10, 20].map((y) => [0, 10, 20].map((x) => <rect key={x + "-" + y} x={x} y={y} width="8" height="8" rx="1" fill={INK} />))}
        </svg>
        <svg viewBox="0 0 26 32" className="ml-[39px] h-8 w-[26px]">
          <path d="M2 0H15V10H26V30Q26 32 24 32H2Q0 32 0 30V2Q0 0 2 0zM18 0L26 8H18z" fill={INK} />
        </svg>
        <Caret className="-mt-1.5 ml-[11px] h-2.5 w-[15px]" />
        <svg viewBox="0 0 28 28" className="ml-[37px] size-7">
          <path fillRule="evenodd" d="M2 0H26Q28 0 28 2V26Q28 28 26 28H5L0 24V2Q0 0 2 0zM5 2V12H22V2H20V10H7V2zM7 18V28H10V20H17V28H20V18z" fill={INK} />
          <path d="M14 22h4v6h-4z" fill="#ccc" />
        </svg>
        <svg viewBox="0 0 26 24" className="ml-[39px] h-6 w-[26px] fill-none stroke-[#666] stroke-[3]">
          <path d="M10 1L2 9L10 18M2 9H13Q24 11 24 24" />
        </svg>
        <Caret className="-mt-1.5 ml-[13px] h-2.5 w-[15px]" />
        <svg viewBox="0 0 26 24" className="ml-[23px] h-6 w-[26px] fill-none stroke-[#999] stroke-[3]">
          <path d="M16 1L24 9L16 18M24 9H13Q2 11 2 24" />
        </svg>
        <Caret className="-mt-1.5 ml-[14px] h-2.5 w-[15px] text-[#999]" />
      </div>
      <div className="flex h-[56px] flex-1 items-center rounded-t-[8px] bg-[#f1f1f1] pb-px pr-[13px]">
        <div className="flex flex-1 items-center justify-center pt-0.5 text-[24px] text-[#444]">
          <svg viewBox="0 0 34 32" className="mr-2 h-8 w-[34px]">
            <path d="M1 5L17 0L33 5L17 11z" fill="#666" />
            <path d="M1 5L17 11V31L1 20z" fill="#a6aaab" />
            <path d="M17 11L33 4V20L17 31z" fill="#626262" />
            <path d="M1 5L17 0L33 5V20L17 31L1 20z" fill="none" stroke="#666" strokeWidth="1.200" />
          </svg>
          TR v5*
        </div>
        <svg viewBox="0 0 18 18" className="-mt-1 size-[18px]">
          <path d="M1 1L17 17M17 1L1 17" stroke="#777" strokeWidth="2.200" />
        </svg>
      </div>
      <div className="ml-2 flex h-[56px] w-[56px] items-center justify-center rounded-t-[8px] bg-[#bababa]">
        <svg viewBox="0 0 26 26" className="ml-1 size-[26px]">
          <path d="M13 0V26M0 13H26" stroke="#808080" strokeWidth="6" />
        </svg>
      </div>
      <div className="flex h-12 w-[280px] items-center gap-[34px] pl-[23px]">
        <svg viewBox="0 0 32 32" className="size-8 shrink-0">
          <path d="M16 0A16 16 0 0 1 27 28Q20 33 10 31L8 27Q18 31 21 24Q23 19 20 15L24 8L18 12L16 5L14 13L10 17L12 19Q11 21 13 24Q9 28 4 26A16 16 0 0 1 16 0z" fill={INK} />
          <path d="M19 2L15 12M27 7L20 13M25 14L21 18" stroke="#ccc" strokeWidth="2.500" fill="none" />
        </svg>
        <svg viewBox="0 0 32 32" className="size-8 shrink-0">
          <circle cx="16" cy="16" r="15" fill="none" stroke={INK} strokeWidth="2" />
          <circle cx="16" cy="16" r="12" fill={INK} />
          <path d="M16 8V17H24" fill="none" stroke="#ccc" strokeWidth="2.200" />
        </svg>
        <svg viewBox="0 0 32 32" className="size-8 shrink-0">
          <path d="M16 0Q18 0 18 3Q25 5 25 13V20L29 26H3L7 20V13Q7 5 14 3Q14 0 16 0zM12 28H20L16 32z" fill={INK} />
        </svg>
        <svg viewBox="0 0 32 32" className="size-8 shrink-0">
          <circle cx="16" cy="16" r="16" fill={INK} />
          <path d="M11 12Q11 7 16 7T21 12Q21 15 17.500 16.500Q16 17.500 16 21" fill="none" stroke="#ccc" strokeWidth="3.500" />
          <rect x="14" y="23.500" width="4" height="4" fill="#ccc" />
        </svg>
      </div>
    </div>
  );
}

function Group({ label, width, icons, pad = "", labelPad = "" }: { label: string; width: string; icons: React.ReactNode; pad?: string; labelPad?: string }) {
  return (
    <div className={"relative flex h-[162px] shrink-0 flex-col items-center " + width}>
      <div className={"mt-[48px] flex h-[78px] items-center gap-[22px] pb-px " + pad}>{icons}</div>
      <div className={"flex items-center gap-[7px] pt-0.5 leading-[34px] " + labelPad}>
        {label}
        <Caret />
      </div>
      <div className="absolute bottom-[7px] right-0 h-[102px] w-0.5 bg-[#ccc]" />
    </div>
  );
}

function Ribbon() {
  return (
    <div className="relative flex h-[164px] shrink-0 border-b-2 border-[#ccc] bg-[#f1f1f1] text-[22.600px] text-[#333]">
      <div className="ml-[13px] mt-[21px] flex h-[122px] w-[219px] shrink-0 items-center justify-center gap-2.5 rounded-[9px] border-2 border-[#ccc] pl-[3px] text-[22px] font-bold">
        DESIGN <Caret />
      </div>
      <div className="absolute left-[267px] top-0 flex text-[22.400px] tracking-[0.200px]">
        <div className="flex h-[47px] w-[116px] items-center justify-center border-b-[6px] border-[#0696d7] pt-1.5 font-bold text-[#0696d7]">SOLID</div>
        <div className="flex h-[41px] items-center pl-[62px] pt-1">SURFACE</div>
        <div className="flex h-[41px] items-center pl-[91px] pt-1">SHEET METAL</div>
        <div className="flex h-[41px] items-center pl-[92px] pt-1">TOOLS</div>
      </div>
      <Group label="CREATE" width="w-[547px]" pad="pl-[10px]" icons={<><IconSketch /><IconExtrude /><IconRevolve /><IconHole /><IconPattern /><IconForm /></>} />
      <Group label="MODIFY" width="w-[538px]" pad="pl-[2px]" labelPad="pr-2" icons={<><IconPressPull /><IconFillet /><IconShell /><IconCombine /><IconSplit /><IconMove /></>} />
      <Group label="ASSEMBLE" width="w-[194px]" icons={<><IconNewComponent /><IconJoint /></>} />
      <Group label="CONSTRUCT" width="w-[208px]" icons={<IconConstruct />} />
      <Group label="INSPECT" width="w-[158px]" labelPad="pl-1" icons={<IconInspect />} />
      <Group label="INSERT" width="w-[148px]" icons={<IconInsert />} />
      <div className="flex h-[162px] w-[151px] shrink-0 flex-col items-center">
        <div className="mt-[48px] h-[78px]"><IconSelect /></div>
        <div className="flex items-center gap-[7px] pt-0.5 leading-[34px]">SELECT<Caret /></div>
      </div>
    </div>
  );
}

function Timeline() {
  return (
    <div className="relative flex h-[93px] shrink-0 border-t-2 border-[#ccc] bg-[#f1f1f1]">
      <div className="flex h-[96px] w-[282px] items-center pl-3">
        <svg viewBox="0 0 224 32" className="h-8 w-[224px]">
          <g fill="#4d4d4d">
            <path d="M0 2H3V30H0zM24 2V30L5 16z" />
            <path d="M67 2V30L48 16zM70 8H74V24H70z" />
            <path d="M100 0L123 16L100 32z" />
            <path d="M148 8H152V24H148zM155 2L173 16L155 30z" />
            <path d="M199 2L218 16L199 30zM220 2H223V30H220z" />
          </g>
        </svg>
      </div>
      <div className="flex gap-4 pt-[30px]">
        {timeline.map((k, i) => {
          const T = timelineIcons[k];
          return (
            <div key={i} className="flex w-8 flex-col items-center">
              <T />
              <div className="mt-1.5 h-2.5 w-[3px] bg-[#ccc]" />
            </div>
          );
        })}
      </div>
      <div className="absolute left-[298px] top-[78px] h-1 w-[2882px] bg-[#ccc]" />
      <svg viewBox="0 0 24 64" className="absolute left-[3190px] top-[18px] h-16 w-6">
        <path d="M0 0H24V9L14 19V64H10V19L0 9z" fill="#666" />
      </svg>
    </div>
  );
}

export default function App() {
  return (
    <div className="flex h-[2039px] w-[3258px] flex-col overflow-hidden bg-white font-['Noto_Sans',sans-serif]">
      <div className="flex h-[54px] shrink-0 items-center border-b-2 border-[#a0a0a0] bg-[#f3f3f3]">
        <div className="flex w-[200px] gap-4 pb-1 pl-1.5">
          <div className="size-6 rounded-full bg-[#ee6a5f]" />
          <div className="size-6 rounded-full bg-[#f5bf4f]" />
          <div className="size-6 rounded-full bg-[#61c554]" />
        </div>
        <div className="flex-1 pb-[4px] pl-[79px] pr-[200px] text-center font-['Liberation_Sans',sans-serif] text-[26px] font-bold tracking-[0.530px] text-[#444]">
          Autodesk Fusion 360 (Education License)
        </div>
      </div>
      <TabBar />
      <Ribbon />
      <div className="flex h-[64px] shrink-0 items-center justify-center bg-[#ffc26c] pb-0.5 pl-[27px] font-['Liberation_Sans',sans-serif] text-[26px] font-bold tracking-[-0.012px] text-white">
        <p>
          Note: On Saturday, May 8th, Fusion 360 will undergo planned maintenance. Please check{" "}
          <a className="underline decoration-2 underline-offset-[3px]">Health Dashboard</a> for exact timings.
        </p>
      </div>
      <div className="relative h-[1602px] shrink-0">
        <Scene />
        <BrowserPanel />
        <CommentsPanel />
        <NavBar />
      </div>
      <Timeline />
    </div>
  );
}
